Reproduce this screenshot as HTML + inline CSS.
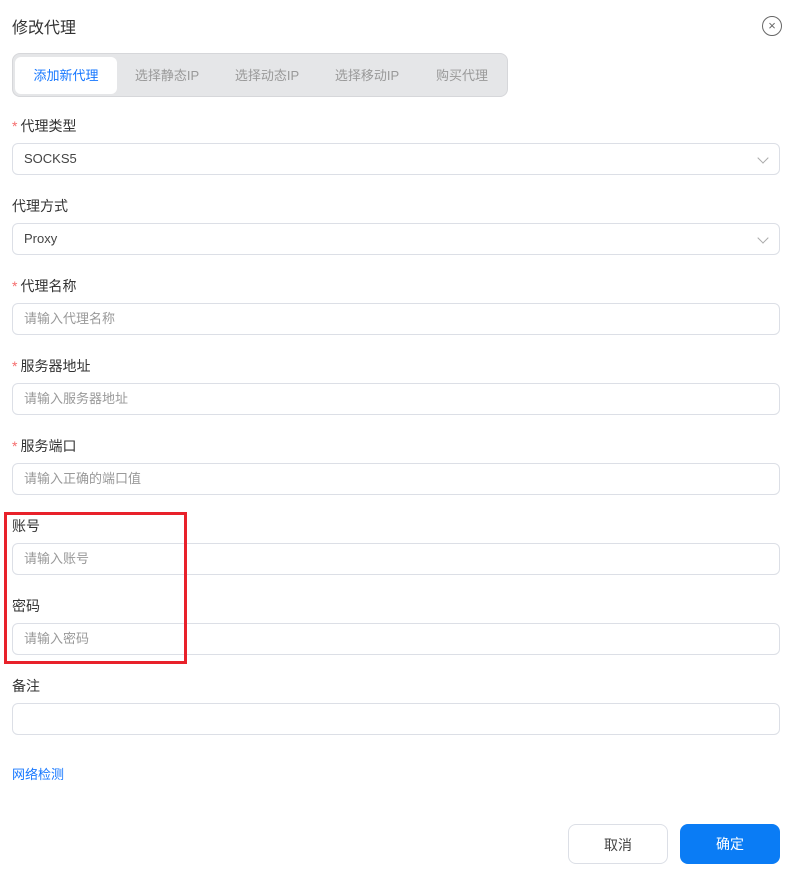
<!DOCTYPE html><html><head><meta charset="utf-8"><style>
*{box-sizing:border-box;margin:0;padding:0}
body{width:792px;height:874px;background:#fff;font-family:"Liberation Sans","Noto Sans CJK SC",sans-serif;position:relative;overflow:hidden;color:#333}
.a{position:absolute}
.title{left:12px;top:14px;font-size:16px;color:#333}
.close{left:762px;top:16px;width:20px;height:20px;border:1.3px solid #666;border-radius:50%;font-size:13px;line-height:17px;text-align:center;color:#666}
.tabs{left:12px;top:53px;width:496px;height:44px;background:#e5e6e8;border:1px solid #d6d7da;border-radius:8px}
.tab{position:absolute;top:3px;height:37px;line-height:37px;font-size:13px;color:#999;text-align:center}
.tab.on{background:#fff;border-radius:6px;color:#1677ff}
.lab{left:12px;font-size:14px;color:#333}
.lab i{color:#f56c6c;font-style:normal;margin-right:3px}
.inp{left:12px;width:768px;height:32px;border:1px solid #dcdfe6;border-radius:6px;font-size:13px;line-height:30px;padding-left:11px;color:#999}
.inp.v{color:#444}
.chev{position:absolute;right:12px;top:10px;width:8px;height:8px;border-right:1px solid #aaa;border-bottom:1px solid #aaa;transform:rotate(45deg)}
.btn{top:824px;width:100px;height:40px;border-radius:8px;font-size:14px;line-height:40px;text-align:center}
</style></head><body>
<div class="a title">修改代理</div>
<div class="a close">×</div>
<div class="a tabs">
<div class="tab on" style="left:2px;width:102px">添加新代理</div>
<div class="tab" style="left:104px;width:100px">选择静态IP</div>
<div class="tab" style="left:204px;width:100px">选择动态IP</div>
<div class="tab" style="left:304px;width:100px">选择移动IP</div>
<div class="tab" style="left:404px;width:90px">购买代理</div>
</div>
<div class="a lab" style="top:116px"><i>*</i>代理类型</div>
<div class="a inp v" style="top:143px">SOCKS5<span class="chev"></span></div>
<div class="a lab" style="top:196px">代理方式</div>
<div class="a inp v" style="top:223px">Proxy<span class="chev"></span></div>
<div class="a lab" style="top:276px"><i>*</i>代理名称</div>
<div class="a inp" style="top:303px">请输入代理名称</div>
<div class="a lab" style="top:356px"><i>*</i>服务器地址</div>
<div class="a inp" style="top:383px">请输入服务器地址</div>
<div class="a lab" style="top:436px"><i>*</i>服务端口</div>
<div class="a inp" style="top:463px">请输入正确的端口值</div>
<div class="a lab" style="top:516px">账号</div>
<div class="a inp" style="top:543px">请输入账号</div>
<div class="a lab" style="top:596px">密码</div>
<div class="a inp" style="top:623px">请输入密码</div>
<div class="a lab" style="top:676px">备注</div>
<div class="a inp" style="top:703px"></div>
<div class="a" style="left:4px;top:512px;width:183px;height:152px;border:3px solid #e8212a"></div>
<div class="a" style="left:12px;top:764px;font-size:13px;color:#1677ff">网络检测</div>
<div class="a btn" style="left:568px;border:1px solid #dcdfe6;color:#444">取消</div>
<div class="a btn" style="left:680px;background:#0a7cf5;color:#fff">确定</div>
</body></html>
